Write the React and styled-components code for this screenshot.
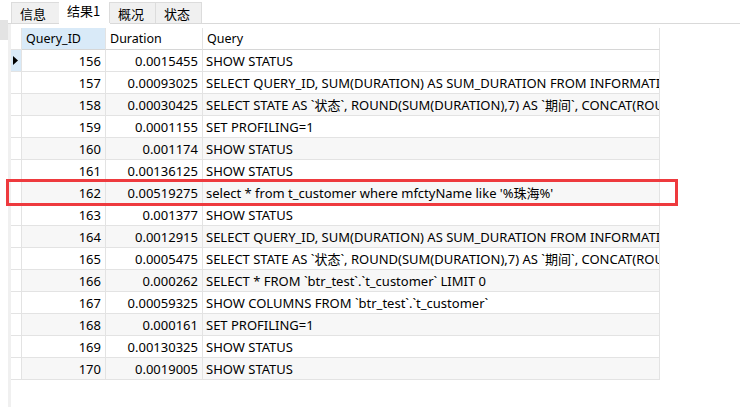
import React from "react";
import styled, { createGlobalStyle } from "styled-components";

const GlobalStyle = createGlobalStyle`
    html, body {
        margin: 0;
        padding: 0;
        background: #ffffff;
    }
    body {
        font-family: "Noto Sans", "Noto Sans CJK SC", sans-serif;
    }
`;

const rows = [
    { id: 156, duration: "0.0015455", query: "SHOW STATUS", current: true },
    { id: 157, duration: "0.00093025", query: "SELECT QUERY_ID, SUM(DURATION) AS SUM_DURATION FROM INFORMATION_SCHEMA.PROFILING GROUP BY QUERY_ID" },
    { id: 158, duration: "0.00030425", query: "SELECT STATE AS `状态`, ROUND(SUM(DURATION),7) AS `期间`, CONCAT(ROUND(SUM(DURATION)/0.000930*100,3), '%') AS `百分比`" },
    { id: 159, duration: "0.0001155", query: "SET PROFILING=1" },
    { id: 160, duration: "0.001174", query: "SHOW STATUS" },
    { id: 161, duration: "0.00136125", query: "SHOW STATUS" },
    { id: 162, duration: "0.00519275", query: "select * from t_customer where mfctyName like '%珠海%'" },
    { id: 163, duration: "0.001377", query: "SHOW STATUS" },
    { id: 164, duration: "0.0012915", query: "SELECT QUERY_ID, SUM(DURATION) AS SUM_DURATION FROM INFORMATION_SCHEMA.PROFILING GROUP BY QUERY_ID" },
    { id: 165, duration: "0.0005475", query: "SELECT STATE AS `状态`, ROUND(SUM(DURATION),7) AS `期间`, CONCAT(ROUND(SUM(DURATION)/0.001291*100,3), '%') AS `百分比`" },
    { id: 166, duration: "0.000262", query: "SELECT * FROM `btr_test`.`t_customer` LIMIT 0" },
    { id: 167, duration: "0.00059325", query: "SHOW COLUMNS FROM `btr_test`.`t_customer`" },
    { id: 168, duration: "0.000161", query: "SET PROFILING=1" },
    { id: 169, duration: "0.00130325", query: "SHOW STATUS" },
    { id: 170, duration: "0.0019005", query: "SHOW STATUS" },
];

const tabs = [
    { label: "信息", width: 49 },
    { label: "结果1", width: 51, active: true },
    { label: "概况", width: 47 },
    { label: "状态", width: 47 },
];

const Page = styled.div`
    position: relative;
    width: 740px;
    height: 407px;
    display: flex;
    overflow: hidden;
    background: #ffffff;
`;

// narrow strip of the neighbouring pane on the left
const SidePane = styled.div`
    width: 8px;
    flex: none;
    padding-top: 20px;
`;

const SideBlock = styled.div`
    height: 20px;
    background: #e3e3e3;
`;

const Main = styled.div`
    flex: 1;
    display: flex;
    flex-direction: column;
    min-width: 0;
`;

const TabBar = styled.div`
    height: 23px;
    display: flex;
    align-items: flex-end;
    padding-left: 3px;
    border-bottom: 1px solid #d9d9d9;
`;

const Tab = styled.div`
    box-sizing: border-box;
    width: ${(p) => p.$width}px;
    height: ${(p) => (p.$active ? 24 : 21)}px;
    margin-bottom: ${(p) => (p.$active ? -1 : 0)}px;
    padding: ${(p) => (p.$active ? "2px 0 0 7px" : "3px 0 0 8px")};
    background: ${(p) => (p.$active ? "#ffffff" : "#f0f0f0")};
    border: 1px solid ${(p) => (p.$active ? "#ffffff" : "#dcdcdc")};
    border-bottom: none;
    margin-right: -1px;
    font-family: "Noto Sans CJK SC", sans-serif;
    font-size: 13px;
    line-height: 16px;
    color: #000000;
`;

const GridArea = styled.div`
    flex: 1;
    padding-top: 4px;
    border-left: 3px solid #f0f0f0;
`;

const Grid = styled.div`
    display: grid;
    grid-template-columns: 11px 84px 97px 457px;
    grid-auto-rows: 22px;
    width: 649px;
    font-family: "Noto Sans", "Noto Sans CJK SC", sans-serif;
    font-size: 13px;
    color: #000000;
`;

const Cell = styled.div`
    box-sizing: border-box;
    display: flex;
    align-items: center;
    overflow: hidden;
    white-space: nowrap;
    border-right: 1px solid #e3e3e3;
    border-bottom: 1px solid #e3e3e3;
    background: ${(p) => p.$bg || "transparent"};
    justify-content: ${(p) => (p.$right ? "flex-end" : "flex-start")};
    padding: ${(p) => (p.$right ? "0 4px 0 0" : "0 0 0 3px")};
    line-height: 16px;
`;

const HeaderCell = styled(Cell)`
    padding: 0 0 0 4px;
    font-size: 12.5px;
    border-bottom-color: #d6d6d6;
`;

const RowHead = styled.div`
    box-sizing: border-box;
    display: flex;
    align-items: center;
    padding-left: 2px;
    border-right: 1px solid #e3e3e3;
    border-bottom: 1px solid #e3e3e3;
    background: ${(p) => (p.$current ? "#d9eaf8" : "#ffffff")};
`;

const Marker = () => (
    <svg width="5" height="9" viewBox="0 0 5 9">
        <path d="M0 0 L5 4.5 L0 9 Z" fill="#000000" />
    </svg>
);

const Highlight = styled.div`
    position: absolute;
    left: 6px;
    top: 179px;
    width: 672px;
    height: 27px;
    box-sizing: border-box;
    border: 3px solid #ee3a3e;
    pointer-events: none;
`;

const rowBg = (i) => (i % 2 === 0 && i > 0 ? "#f7f7f7" : "#ffffff");

export default function App() {
    return (
        <>
            <GlobalStyle />
            <Page>
                <SidePane>
                    <SideBlock />
                </SidePane>
                <Main>
                    <TabBar>
                        {tabs.map((t) => (
                            <Tab key={t.label} $width={t.width} $active={t.active}>
                                {t.label}
                            </Tab>
                        ))}
                    </TabBar>
                    <GridArea>
                        <Grid>
                            <RowHead />
                            <HeaderCell $bg="#d9eaf8">Query_ID</HeaderCell>
                            <HeaderCell>Duration</HeaderCell>
                            <HeaderCell>Query</HeaderCell>
                            {rows.map((r, i) => (
                                <React.Fragment key={r.id}>
                                    <RowHead $current={r.current}>
                                        {r.current && <Marker />}
                                    </RowHead>
                                    <Cell $right $bg={rowBg(i)}>{r.id}</Cell>
                                    <Cell $right $bg={rowBg(i)}>{r.duration}</Cell>
                                    <Cell $bg={rowBg(i)}>{r.query}</Cell>
                                </React.Fragment>
                            ))}
                        </Grid>
                    </GridArea>
                </Main>
                <Highlight />
            </Page>
        </>
    );
}
